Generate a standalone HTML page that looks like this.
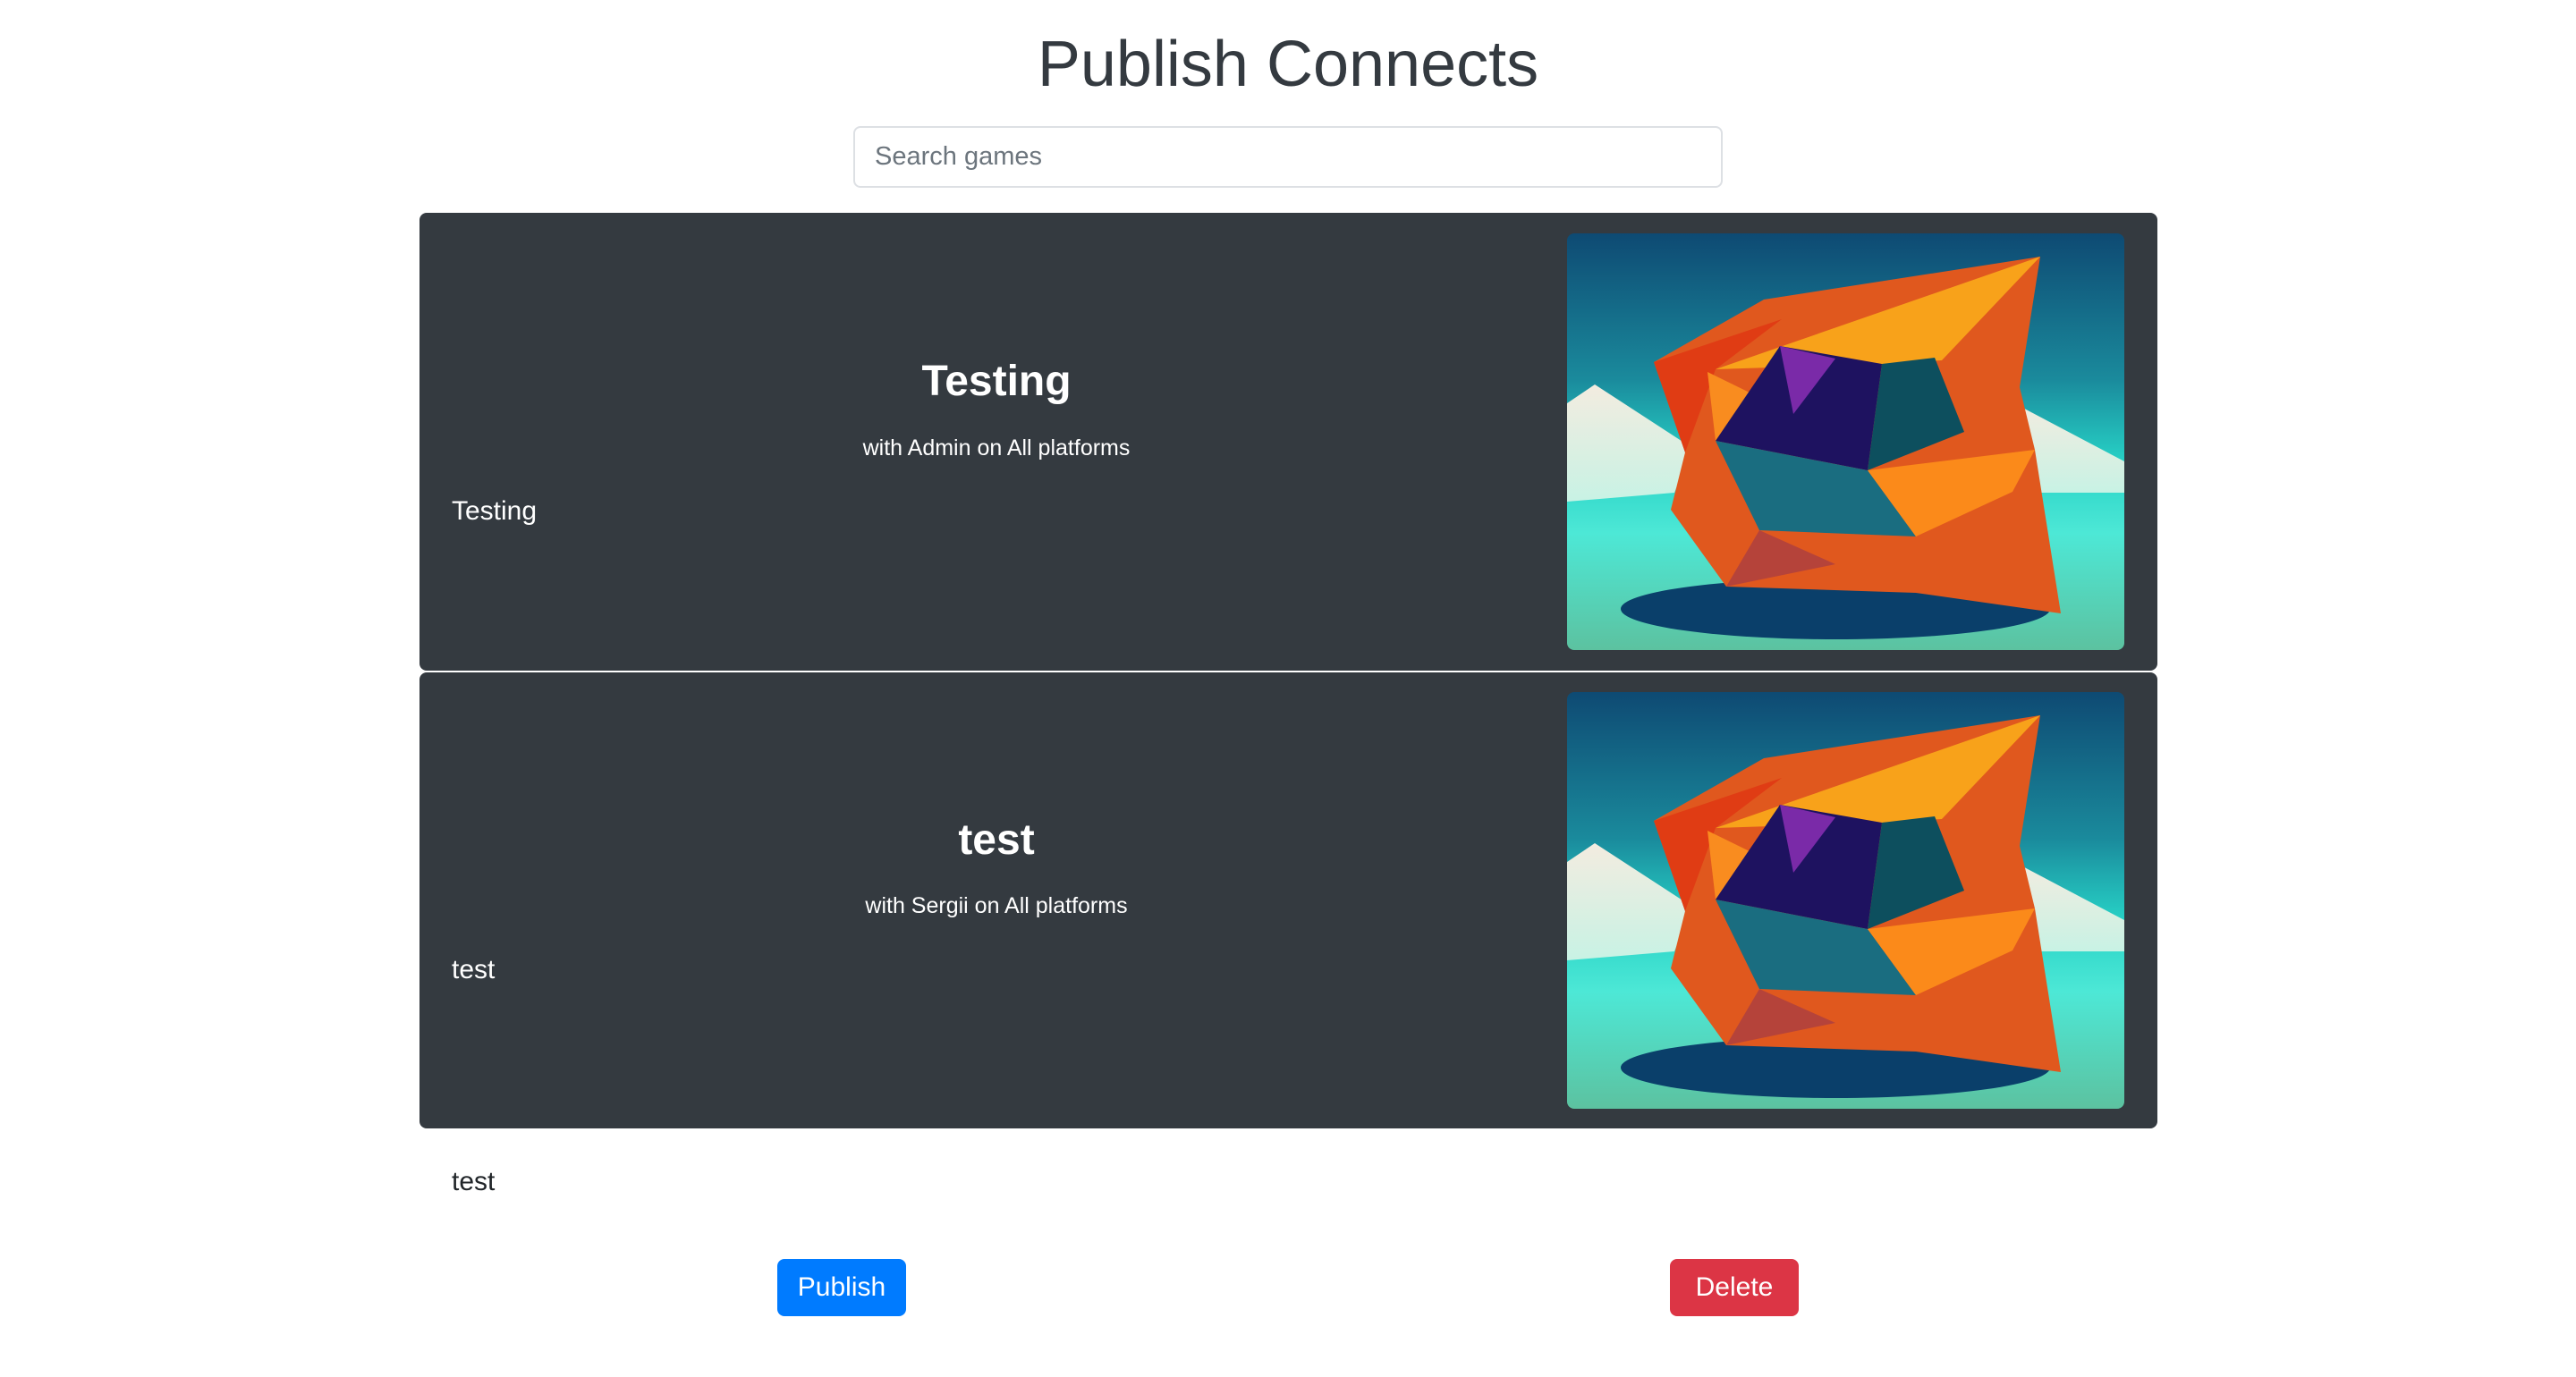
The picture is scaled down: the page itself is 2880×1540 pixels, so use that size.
<!DOCTYPE html>
<html><head><meta charset="utf-8"><style>
*{margin:0;padding:0;box-sizing:border-box}
body{width:2880px;height:1540px;background:#fff;font-family:"Liberation Sans",sans-serif;position:relative;overflow:hidden}
.abs{position:absolute}
h1{position:absolute;left:0;width:2880px;text-align:center;top:24px;font-size:72px;font-weight:500;color:#343a40;line-height:96px}
.search{left:954px;top:141px;width:972px;height:69px;border:2px solid #dde0e4;border-radius:8px;font-size:29px;color:#6c757d;padding-left:22px;line-height:65px}
.card{left:469px;width:1943px;background:#343a40;border-radius:8px}
.h{position:absolute;width:1300px;left:464px;text-align:center;color:#fff}
.big{font-size:48px;font-weight:bold;line-height:60px}
.sub{font-size:25px;line-height:30px}
.lt{font-size:30px;color:#fff;line-height:36px}
.img{position:absolute;width:623px;height:466px;border-radius:8px;overflow:hidden;left:1752px}
.btn{position:absolute;top:1408px;height:64px;width:144px;border-radius:8px;color:#fff;font-size:30px;text-align:center;line-height:64px}
</style></head><body>
<h1>Publish Connects</h1>
<div class="abs search">Search games</div>

<div class="abs card" style="top:238px;height:512px"></div>
<div class="abs card" style="top:752px;height:510px"></div>

<div class="h big" style="top:397px">Testing</div>
<div class="h sub" style="top:486px">with Admin on All platforms</div>
<div class="abs lt" style="left:505px;top:554px">Testing</div>

<div class="h big" style="top:910px">test</div>
<div class="h sub" style="top:998px">with Sergii on All platforms</div>
<div class="abs lt" style="left:505px;top:1067px">test</div>

<div class="abs lt" style="left:505px;top:1304px;color:#212529">test</div>

<svg width="0" height="0" style="position:absolute"><defs>
<linearGradient id="bg" x1="0" y1="0" x2="0" y2="1">
<stop offset="0" stop-color="#0e4a73"/><stop offset="0.35" stop-color="#1a8a9c"/><stop offset="0.55" stop-color="#27d2c6"/><stop offset="0.72" stop-color="#4de8d6"/><stop offset="1" stop-color="#5cc2a0"/></linearGradient>
<linearGradient id="mt" x1="0" y1="0" x2="0" y2="1"><stop offset="0" stop-color="#f3ece0"/><stop offset="1" stop-color="#c8f2e4"/></linearGradient>
<g id="art">
<rect width="623" height="466" fill="url(#bg)"/>
<polygon points="0,190 31,169 140,240 120,290 0,300" fill="url(#mt)"/>
<polygon points="480,205 498,189 623,255 623,290 480,290" fill="url(#mt)"/>
<ellipse cx="300" cy="420" rx="240" ry="34" fill="#0a3f6a"/>
<polygon points="97,144 220,74 529,26 506,172 523,242 552,425 390,402 178,395 116,309 132,245" fill="#e0581e"/>
<polygon points="166,152 529,26 419,142 352,146" fill="#f8a21a"/>
<polygon points="97,144 240,96 166,152 132,245" fill="#e03c14"/>
<polygon points="157,155 253,202 166,232" fill="#f98c1f"/>
<polygon points="238,126 352,146 336,265 166,232" fill="#1e1260"/>
<polygon points="238,126 300,140 253,202" fill="#7a2aa8"/>
<polygon points="352,146 411,139 444,222 336,265" fill="#0d4f5e"/>
<polygon points="166,232 336,265 390,339 215,332" fill="#1a6d80"/>
<polygon points="336,265 523,242 498,289 390,339" fill="#fb8a1a"/>
<polygon points="178,395 215,332 300,370" fill="#b5433a"/>
</g></defs></svg>
<svg class="img" style="top:261px" viewBox="0 0 623 466"><use href="#art"/></svg>
<svg class="img" style="top:774px" viewBox="0 0 623 466"><use href="#art"/></svg>

<div class="btn" style="left:869px;background:#007bff">Publish</div>
<div class="btn" style="left:1867px;background:#dc3545">Delete</div>
</body></html>
